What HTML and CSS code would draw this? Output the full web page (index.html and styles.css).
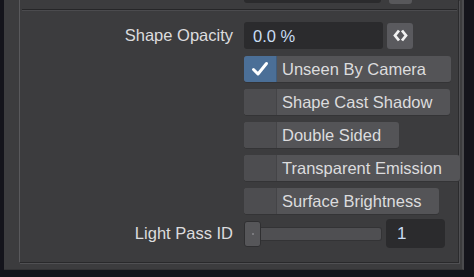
FILE: index.html
```html
<!DOCTYPE html>
<html lang="en">
<head>
  <meta charset="UTF-8" />
  <meta name="viewport" content="width=device-width, initial-scale=1.0" />
  <title>Surface Properties</title>
  <link rel="stylesheet" href="styles.css">
</head>
<body>
  <div class="window">
    <div class="panel">
      <!-- bottom edge of the row above, scrolled out of view -->
      <div class="row stub">
        <span class="label"></span>
        <div class="stub-field"></div>
        <div class="stub-btn"></div>
      </div>
      <div class="sep"></div>

      <div class="row opacity-row">
        <span class="label">Shape Opacity</span>
        <div class="field">0.0 %</div>
        <button class="env-btn">
          <svg width="15" height="13" viewBox="0 0 15 13"><path d="M6 1.5 L2 6.5 L6 11.5 M9 1.5 L13 6.5 L9 11.5" fill="none" stroke="#f2f2f2" stroke-width="2.8" stroke-linejoin="miter"/></svg>
        </button>
      </div>

      <div class="row check-row">
        <span class="label"></span>
        <div class="check on">
          <span class="box">
            <svg width="18" height="16" viewBox="0 0 18 16"><path d="M2.5 8.5 L7 13 L15.5 2.5" fill="none" stroke="#fff" stroke-width="3" stroke-linecap="round" stroke-linejoin="round"/></svg>
          </span>
          <span class="text">Unseen By Camera</span>
        </div>
      </div>
      <div class="row check-row">
        <span class="label"></span>
        <div class="check"><span class="box"></span><span class="text">Shape Cast Shadow</span></div>
      </div>
      <div class="row check-row">
        <span class="label"></span>
        <div class="check"><span class="box"></span><span class="text">Double Sided</span></div>
      </div>
      <div class="row check-row">
        <span class="label"></span>
        <div class="check"><span class="box"></span><span class="text">Transparent Emission</span></div>
      </div>
      <div class="row check-row">
        <span class="label"></span>
        <div class="check"><span class="box"></span><span class="text">Surface Brightness</span></div>
      </div>

      <div class="row pass-row">
        <span class="label">Light Pass ID</span>
        <div class="slider">
          <span class="knob"><i></i></span>
          <span class="track"></span>
        </div>
        <div class="num">1</div>
      </div>
    </div>
  </div>
</body>
</html>
```

FILE: styles.css
```css
*, *::before, *::after { box-sizing: border-box; }

/* Global styles */
html, body { margin: 0; height: 100%; }
body { background: #14141b; font-family: 'Liberation Sans', Arial, sans-serif; font-size: 16.5px; color: #dcdcde; overflow: hidden; }

/* Window + inner group */
.window { margin-left: 4px; width: 460px; height: 270px; background: #3c3c3e; padding-left: 15px; border-right: 2px solid #4b4b4e; border-bottom: 1px solid #333335; }
.panel { width: 440px; height: 263px; border-left: 1px solid #59595c; border-right: 1px solid #2b2b2d; border-bottom: 1px solid #29292b; box-shadow: 1px 1px 0 #505053; display: flex; flex-direction: column; }

/* Rows */
.row { display: flex; align-items: center; }
.label { width: 213px; margin-right: 11px; text-align: right; flex-shrink: 0; white-space: nowrap; }

.stub { height: 3px; align-items: flex-start; }
.stub-field { width: 137px; height: 3px; background: #2b2b2d; border-radius: 0 0 3px 3px; }
.stub-btn { width: 23px; height: 4px; margin-left: 8px; background: #58585b; border-radius: 0 0 3px 3px; }

.sep { margin: 6px 1px 0 2px; border-top: 1px solid #262628; border-bottom: 1px solid #4b4b4e; }

/* Shape opacity */
.opacity-row { margin-top: 11px; height: 27px; }
.field { width: 139px; height: 27px; background: #2b2b2d; border-radius: 3px; padding-left: 9px; line-height: 28px; color: #c9ddf3; }
.env-btn { width: 26px; height: 26px; margin-left: 4px; border: none; border-radius: 3px; background: #5a5a5e; display: flex; align-items: center; justify-content: center; padding: 0; }

/* Checkbox rows */
.check-row { margin-top: 7px; height: 26px; }
.check { display: flex; flex-shrink: 0; height: 26px; border-radius: 3px; overflow: hidden; background: #545457; box-shadow: 0 1px 0 #343436; }
.check .box { width: 33px; flex-shrink: 0; background: #4d4d50; border-right: 1px solid #444447; display: flex; align-items: center; justify-content: center; }
.check.on .box { background: #4b6f97; border-right-color: #3f5c7c; }
.check .text { padding: 0 18px 0 5px; line-height: 27px; white-space: nowrap; }
.check.on .text { padding-right: 25px; }

/* Light pass */
.pass-row { margin-top: 5px; height: 29px; }
.slider { width: 138px; display: flex; align-items: center; }
.knob { width: 17px; height: 26px; background: #565659; border-radius: 3px; border: 1px solid #2f2f31; display: flex; align-items: center; justify-content: center; position: relative; z-index: 1; }
.knob i { width: 2px; height: 2px; background: #7a7a7e; }
.track { flex: 1; height: 14px; background: #4f4f52; border: 1px solid #333335; border-left: none; border-radius: 0 3px 3px 0; }
.num { width: 59px; height: 29px; margin-left: 4px; background: #2b2b2d; border-radius: 4px; padding-left: 11px; line-height: 30px; color: #c9ddf3; font-size: 17px; }
```
